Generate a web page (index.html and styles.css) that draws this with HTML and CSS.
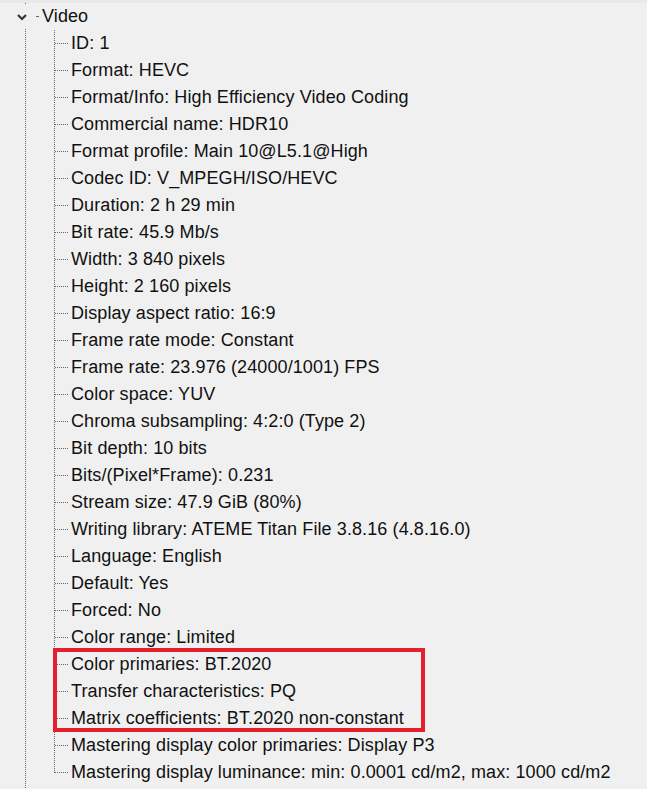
FILE: index.html
```html
<!DOCTYPE html>
<html lang="en">
<head>
  <meta charset="UTF-8">
  <meta name="viewport" content="width=device-width, initial-scale=1.0">
  <title>MediaInfo - Video</title>
  <link rel="stylesheet" href="styles.css">
</head>
<body>
  <div class="topbar"></div>
  <div class="tree">
    <div class="node-label">
      <span class="toggle">
        <svg width="12" height="8" viewBox="0 0 12 8">
          <path d="M2 2 L6 6 L10 2" fill="none" stroke="#333" stroke-width="2.2"/>
        </svg>
      </span>
      <span class="link"></span>
      <span>Video</span>
    </div>
    <div class="children">
      <div class="item">ID: 1</div>
      <div class="item">Format: HEVC</div>
      <div class="item">Format/Info: High Efficiency Video Coding</div>
      <div class="item">Commercial name: HDR10</div>
      <div class="item">Format profile: Main 10@L5.1@High</div>
      <div class="item">Codec ID: V_MPEGH/ISO/HEVC</div>
      <div class="item">Duration: 2 h 29 min</div>
      <div class="item">Bit rate: 45.9 Mb/s</div>
      <div class="item">Width: 3 840 pixels</div>
      <div class="item">Height: 2 160 pixels</div>
      <div class="item">Display aspect ratio: 16:9</div>
      <div class="item">Frame rate mode: Constant</div>
      <div class="item">Frame rate: 23.976 (24000/1001) FPS</div>
      <div class="item">Color space: YUV</div>
      <div class="item">Chroma subsampling: 4:2:0 (Type 2)</div>
      <div class="item">Bit depth: 10 bits</div>
      <div class="item">Bits/(Pixel*Frame): 0.231</div>
      <div class="item">Stream size: 47.9 GiB (80%)</div>
      <div class="item">Writing library: ATEME Titan File 3.8.16 (4.8.16.0)</div>
      <div class="item">Language: English</div>
      <div class="item">Default: Yes</div>
      <div class="item">Forced: No</div>
      <div class="item">Color range: Limited</div>
      <div class="highlight">
        <div class="item">Color primaries: BT.2020</div>
        <div class="item">Transfer characteristics: PQ</div>
        <div class="item">Matrix coefficients: BT.2020 non-constant</div>
      </div>
      <div class="item">Mastering display color primaries: Display P3</div>
      <div class="item">Mastering display luminance: min: 0.0001 cd/m2, max: 1000 cd/m2</div>
    </div>
  </div>
</body>
</html>
```

FILE: styles.css
```css
html, body {
  margin: 0;
  height: 100%;
  background: #f0f0f0;
  font-family: "Liberation Sans", Arial, sans-serif;
  font-size: 18px;
  letter-spacing: 0.1px;
  color: #111;
  overflow: hidden;
}

.topbar {
  height: 3px;
  background: #e9e9e9;
}

.tree {
  margin-left: 25px;
  min-height: 100vh;
  border-left: 1px dotted #666;
}

.node-label {
  display: flex;
  align-items: center;
  height: 27px;
  margin-left: -11px;
}

.toggle {
  display: flex;
  align-items: center;
  justify-content: center;
  width: 14px;
  height: 24px;
  background: #f0f0f0;
}

.link {
  width: 2px;
  margin: 0 4px 0 7px;
  border-top: 1px dotted #666;
}

.children {
  position: relative;
  margin-left: 28px;
}

.children::before {
  content: "";
  position: absolute;
  left: 0;
  top: 0;
  bottom: 13px;
  border-left: 1px dotted #666;
}

.item {
  position: relative;
  height: 27px;
  line-height: 27px;
  padding-left: 17px;
  white-space: nowrap;
}

.item::before {
  content: "";
  position: absolute;
  left: 1px;
  top: 13px;
  width: 13px;
  border-top: 1px dotted #666;
}

.highlight {
  position: relative;
}

.highlight::after {
  content: "";
  position: absolute;
  left: -1px;
  top: -3px;
  bottom: 0;
  width: 364px;
  border: 4px solid #e3202b;
}
```
